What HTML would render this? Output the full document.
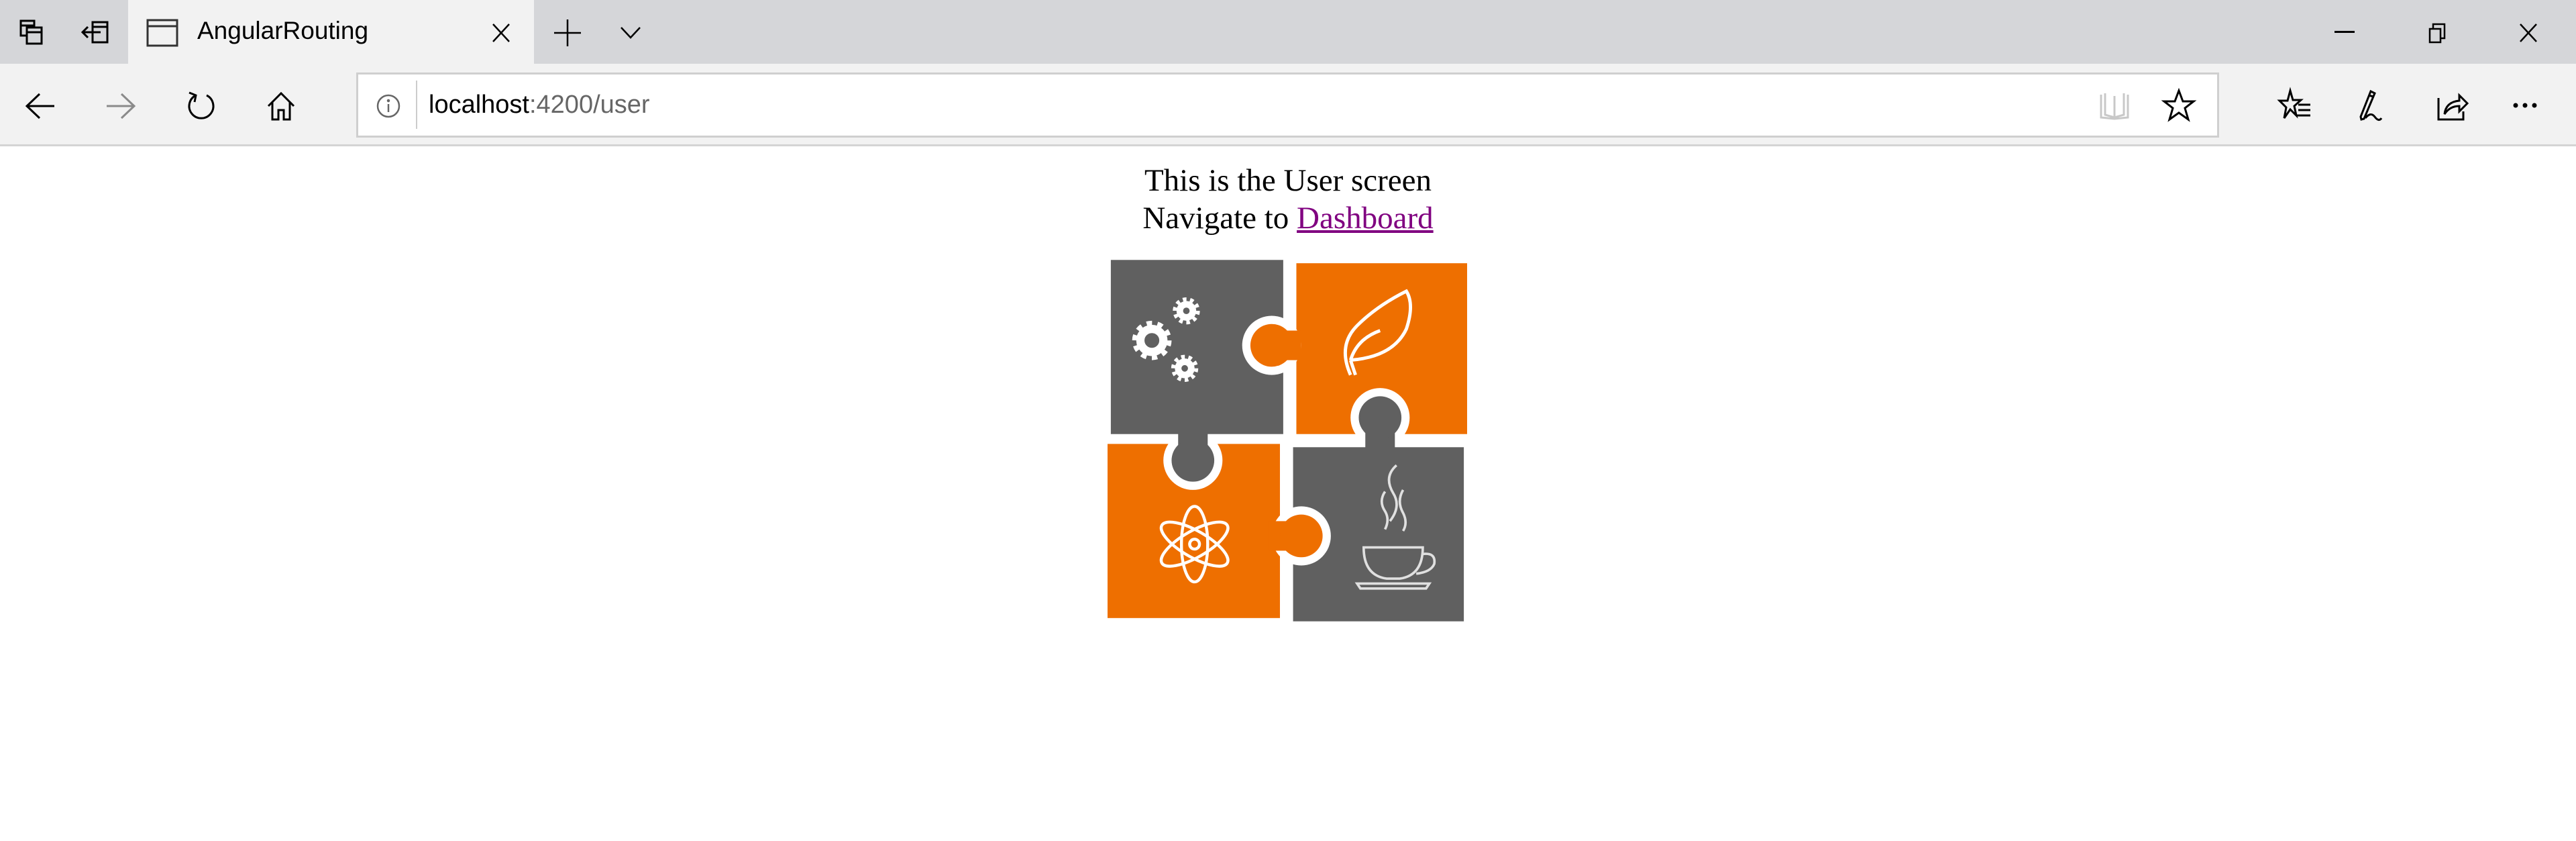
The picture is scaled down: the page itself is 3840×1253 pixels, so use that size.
<!DOCTYPE html>
<html><head><meta charset="utf-8">
<style>
html,body{margin:0;padding:0;width:3840px;height:1253px;overflow:hidden;background:#fff;}
#tabbar{position:absolute;left:0;top:0;width:3840px;height:95px;background:#d5d6d9;}
#tab{position:absolute;left:191px;top:0;width:605px;height:95px;background:#f2f2f2;}
#toolbar{position:absolute;left:0;top:95px;width:3840px;height:120px;background:#f2f2f2;border-bottom:3px solid #d4d4d4;}
#addr{position:absolute;left:531px;top:108px;width:2771px;height:91px;background:#fff;border:3px solid #cfcfcf;}
.t{position:absolute;font-family:"Liberation Sans",sans-serif;color:#000;}
svg{position:absolute;overflow:visible;}
#content{position:absolute;left:0;top:241px;width:3840px;text-align:center;font-family:"Liberation Serif",serif;font-size:47px;line-height:56px;color:#000;}
#content a{color:#800080;text-decoration:underline;}
</style></head><body>
<div id="tabbar"></div>
<div id="tab"></div>
<svg style="left:28px;top:28px" width="40" height="40" viewBox="0 0 40 40" fill="none" stroke="#000" stroke-width="3">
<rect x="3" y="3" width="20" height="22"/><line x1="3" y1="10" x2="23" y2="10"/><rect x="12" y="13" width="22" height="24" fill="#d5d6d9"/><line x1="12" y1="20" x2="34" y2="20"/></svg>
<svg style="left:120px;top:30px" width="48" height="36" viewBox="0 0 48 36" fill="none" stroke="#000" stroke-width="3">
<rect x="18" y="3" width="22" height="30"/><line x1="18" y1="10" x2="40" y2="10"/><line x1="3" y1="18" x2="30" y2="18"/><polyline points="11,10 3,18 11,26"/></svg>
<svg style="left:218px;top:28px" width="48" height="42" viewBox="0 0 48 42" fill="none" stroke="#333" stroke-width="3">
<rect x="2" y="2" width="44" height="38"/><line x1="2" y1="11" x2="46" y2="11"/></svg>
<div class="t" style="left:294px;top:25px;font-size:37px;">AngularRouting</div>
<svg style="left:733px;top:34px" width="28" height="30" viewBox="0 0 28 30" stroke="#000" stroke-width="2.5"><line x1="2" y1="2" x2="26" y2="28"/><line x1="26" y1="2" x2="2" y2="28"/></svg>
<svg style="left:826px;top:29px" width="40" height="40" viewBox="0 0 40 40" stroke="#000" stroke-width="2.5"><line x1="20" y1="0" x2="20" y2="40"/><line x1="0" y1="20" x2="40" y2="20"/></svg>
<svg style="left:925px;top:40px" width="30" height="18" viewBox="0 0 30 18" fill="none" stroke="#000" stroke-width="2.5"><polyline points="1,1 15,16 29,1"/></svg>
<svg style="left:3480px;top:46px" width="30" height="4" viewBox="0 0 30 4"><rect width="30" height="3" fill="#000"/></svg>
<svg style="left:3620px;top:33px" width="26" height="32" viewBox="0 0 26 32" fill="none" stroke="#000" stroke-width="2.5"><rect x="2" y="10" width="16" height="20"/><polyline points="7,10 7,3 24,3 24,24 18,24"/></svg>
<svg style="left:3755px;top:34px" width="28" height="30" viewBox="0 0 28 30" stroke="#000" stroke-width="2.5"><line x1="2" y1="2" x2="26" y2="28"/><line x1="26" y1="2" x2="2" y2="28"/></svg>
<div id="toolbar"></div>
<div id="addr"></div>
<svg style="left:37px;top:138px" width="46" height="40" viewBox="0 0 46 40" fill="none" stroke="#000" stroke-width="3"><line x1="3" y1="20" x2="44" y2="20"/><polyline points="22,2 3,20 22,38"/></svg>
<svg style="left:157px;top:138px" width="46" height="40" viewBox="0 0 46 40" fill="none" stroke="#8a8a8a" stroke-width="3"><line x1="2" y1="20" x2="43" y2="20"/><polyline points="24,2 43,20 24,38"/></svg>
<svg style="left:278px;top:134px" width="44" height="48" viewBox="0 0 44 48" fill="none" stroke="#000" stroke-width="3"><path d="M14 8 A18 18 0 1 0 30 8"/><polyline points="4,4 14,8 12,18"/></svg>
<svg style="left:397px;top:136px" width="44" height="44" viewBox="0 0 44 44" fill="none" stroke="#000" stroke-width="3"><polyline points="3,22 22,3 41,22"/><polyline points="9,16 9,42 18,42 18,28 26,28 26,42 35,42 35,16"/></svg>
<svg style="left:560px;top:139px" width="38" height="38" viewBox="0 0 38 38" fill="none" stroke="#666" stroke-width="2.5"><circle cx="19" cy="19" r="16"/><line x1="19" y1="16" x2="19" y2="28"/><circle cx="19" cy="11" r="1" fill="#666"/></svg>
<div style="position:absolute;left:620px;top:120px;width:2px;height:72px;background:#ccc"></div>
<div class="t" style="left:639px;top:135px;font-size:38px;">localhost<span style="color:#666">:4200/user</span></div>
<svg style="left:3128px;top:137px" width="48" height="42" viewBox="0 0 48 42" fill="none" stroke="#c8c8c8" stroke-width="3"><path d="M24 6 L24 40 M4 4 L4 38 L24 40 L44 38 L44 4 M10 2 L10 34 L24 38 L38 34 L38 2"/></svg>
<svg style="left:3223px;top:132px" width="50" height="50" viewBox="0 0 50 50" fill="none" stroke="#000" stroke-width="3"><polygon points="25,3 31,19 47,19 34,29 39,46 25,36 11,46 16,29 3,19 19,19"/></svg>
<svg style="left:3396px;top:132px" width="52" height="50" viewBox="0 0 52 50" fill="none" stroke="#000" stroke-width="3"><polygon points="18,3 22,17 34,17 24,26 27,40 18,31 9,44 12,28 2,18 14,18"/><line x1="30" y1="24" x2="48" y2="24"/><line x1="30" y1="32" x2="48" y2="32"/><line x1="28" y1="40" x2="48" y2="40"/></svg>
<svg style="left:3514px;top:132px" width="50" height="50" viewBox="0 0 50 50" fill="none" stroke="#000" stroke-width="3"><path d="M20 4 L26 7 L10 45 L6 46 L5 42 Z M24 12 L17 10"/><path d="M12 44 Q20 34 26 42 T36 44"/></svg>
<svg style="left:3632px;top:132px" width="50" height="50" viewBox="0 0 50 50" fill="none" stroke="#000" stroke-width="3"><polyline points="3,14 3,46 40,46 40,34"/><path d="M12 38 Q14 20 34 18 L34 10 L46 22 L34 34 L34 26 Q20 26 12 38 Z"/></svg>
<svg style="left:3746px;top:153px" width="40" height="8" viewBox="0 0 40 8" fill="#000"><circle cx="4" cy="4" r="3.5"/><circle cx="18" cy="4" r="3.5"/><circle cx="32" cy="4" r="3.5"/></svg>

<div id="content">This is the User screen<br>Navigate to <a>Dashboard</a></div>

<svg style="left:1651px;top:387px" width="536" height="539" viewBox="674 158 219 220">
<rect x="676" y="158" width="105" height="106" fill="#606060"/>
<rect x="789" y="160" width="104" height="104" fill="#ee6f00"/>
<rect x="674" y="270" width="105" height="106" fill="#ee6f00"/>
<rect x="787" y="272" width="104" height="106" fill="#606060"/>
<circle cx="774" cy="210" r="18" fill="#fff"/><rect x="772" y="201" width="20" height="18" fill="#ee6f00"/><circle cx="774" cy="210" r="13" fill="#ee6f00"/>
<circle cx="726" cy="280" r="18" fill="#fff"/><rect x="717" y="258" width="18" height="22" fill="#606060"/><circle cx="726" cy="280" r="13" fill="#606060"/>
<circle cx="840" cy="254" r="18" fill="#fff"/><rect x="831" y="254" width="18" height="22" fill="#606060"/><circle cx="840" cy="254" r="13" fill="#606060"/>
<circle cx="792" cy="326" r="18" fill="#fff"/><rect x="772" y="317" width="20" height="18" fill="#ee6f00"/><circle cx="792" cy="326" r="13" fill="#ee6f00"/>
<g fill="none" stroke="#fff">
<circle cx="701" cy="207" r="7" stroke-width="5"/>
<circle cx="701" cy="207" r="10.5" stroke-width="3" stroke-dasharray="3.3 3.3"/>
<circle cx="722" cy="189" r="4" stroke-width="4"/>
<circle cx="722" cy="189" r="7" stroke-width="2.5" stroke-dasharray="2.2 2.2"/>
<circle cx="721" cy="224" r="4" stroke-width="4"/>
<circle cx="721" cy="224" r="7" stroke-width="2.5" stroke-dasharray="2.2 2.2"/>
</g>
<g fill="none" stroke="#fff" stroke-width="2">
<path d="M822 228 Q814 210 826 198 Q838 186 856 177 Q861 185 856 200 Q848 217 822 219"/>
<path d="M822 219 Q826 206 840 201"/>
<path d="M822 219 L825 228"/>
</g>
<g fill="none" stroke="#fff" stroke-width="1.8">
<ellipse cx="727" cy="331" rx="8" ry="23"/>
<ellipse cx="727" cy="331" rx="8" ry="23" transform="rotate(60 727 331)"/>
<ellipse cx="727" cy="331" rx="8" ry="23" transform="rotate(-60 727 331)"/>
<circle cx="727" cy="331" r="3"/>
</g>
<g fill="none" stroke="#e0e0e0" stroke-width="1.5">
<path d="M830 333 L866 333 Q866 350 852 352 L844 352 Q830 350 830 333 Z"/>
<path d="M866 337 Q874 336 873 343 Q871 348 862 349"/>
<path d="M826 355 L870 355 L868 358 L828 358 Z"/>
<path d="M850 283 Q842 290 848 300 Q853 308 846 317"/>
<path d="M843 299 Q839 305 843 311 Q846 316 843 322"/>
<path d="M854 298 Q850 305 854 312 Q857 318 854 323"/>
</g>
</svg>
</body></html>
